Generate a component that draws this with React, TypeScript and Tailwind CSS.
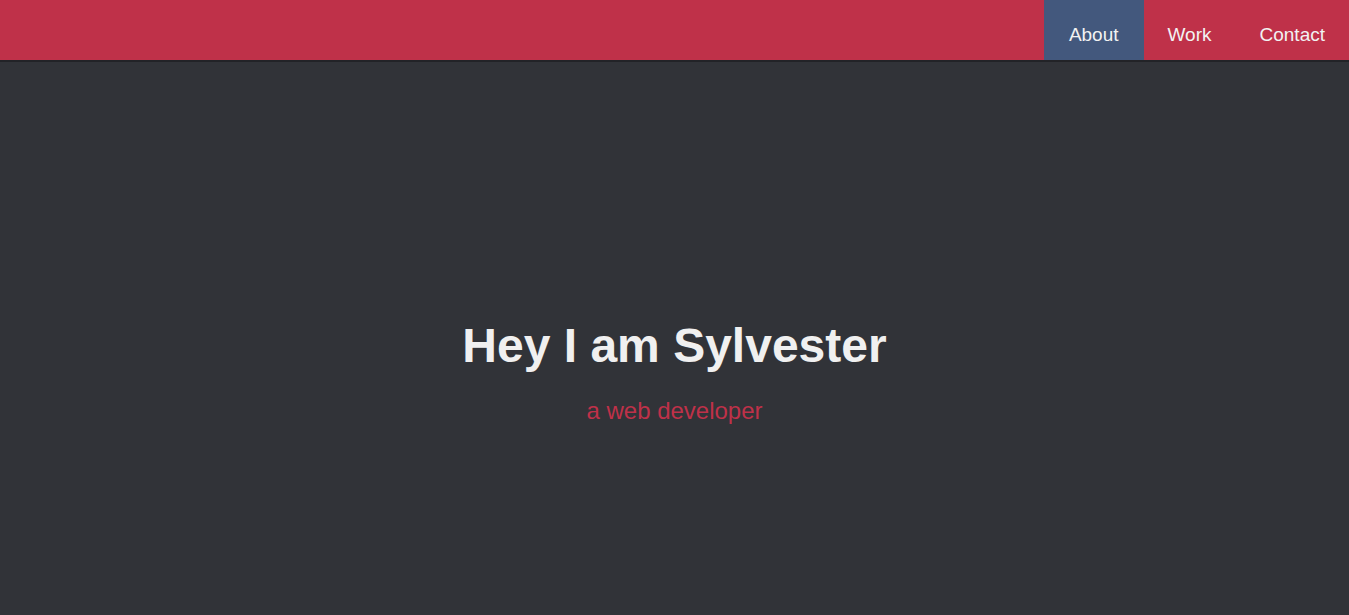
export default function App() {
  return (
    <div className="flex h-[615px] flex-col bg-[#313338] font-['Liberation_Sans',Arial,sans-serif]">
      <header className="flex h-[62px] shrink-0 justify-end border-b-2 border-[#222327] bg-[#bf3149]">
        <nav className="flex text-[19px] text-[#f2f2f2]">
          {['About', 'Work', 'Contact'].map((item, i) => (
            <a
              key={item}
              href={`#${item.toLowerCase()}`}
              className={`flex items-center px-6 pt-[10px] ${i === 0 ? 'bg-[#43587d] pl-[25px] pr-[25px]' : ''}`}
            >
              {item}
            </a>
          ))}
        </nav>
      </header>
      <main className="flex flex-1 flex-col items-center justify-center pt-[68px]">
        <h1 className="text-[48px] font-bold leading-tight text-[#f0f0f0]">Hey I am Sylvester</h1>
        <p className="mt-[17px] text-[24px] text-[#bf3149]">a web developer</p>
      </main>
    </div>
  )
}
